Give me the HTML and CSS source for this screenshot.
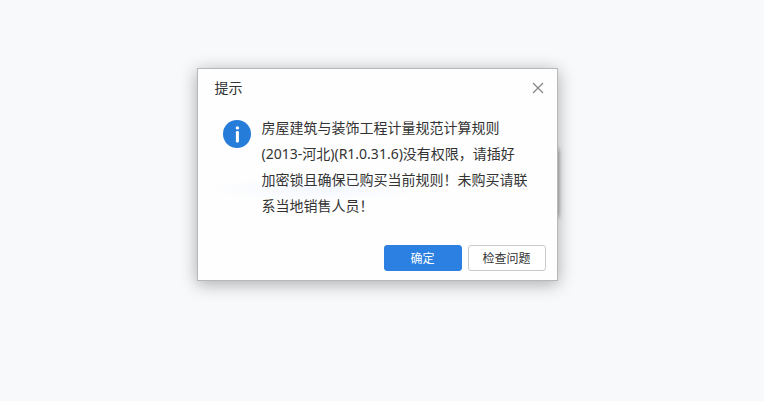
FILE: index.html
```html
<!DOCTYPE html>
<html lang="zh-CN">

<head>
    <meta charset="UTF-8">
    <meta name="viewport" content="width=device-width, initial-scale=1.0">
    <title>提示</title>
    <link rel="stylesheet" href="styles.css">
</head>

<body>
    <main>
        <section class="dialog" role="alertdialog" aria-labelledby="dialog-title" aria-describedby="dialog-message">
            <header class="dialog-header">
                <h1 class="dialog-title" id="dialog-title">提示</h1>
                <button class="close-button" type="button" aria-label="关闭">
                    <svg width="12" height="12" viewBox="0 0 12 12" aria-hidden="true">
                        <path d="M1 1 L11 11 M11 1 L1 11" fill="none" stroke="#858585" stroke-width="1.2" />
                    </svg>
                </button>
            </header>
            <div class="dialog-body">
                <svg class="info-icon" width="28" height="28" viewBox="0 0 28 28" aria-hidden="true">
                    <circle cx="14" cy="14" r="14" fill="#267cd9" />
                    <circle cx="14.4" cy="7.9" r="1.7" fill="#fff" />
                    <rect x="12.9" y="11" width="3" height="11.6" rx="1.3" fill="#fff" />
                </svg>
                <p class="dialog-message" id="dialog-message">房屋建筑与装饰工程计量规范计算规则(2013-河北)(R1.0.31.6)没有权限，请插好加密锁且确保已购买当前规则！未购买请联系当地销售人员！</p>
            </div>
            <footer class="dialog-footer">
                <button class="button button-primary" type="button">确定</button>
                <button class="button" type="button">检查问题</button>
            </footer>
        </section>
    </main>
</body>

</html>
```

FILE: styles.css
```css
* {
    box-sizing: border-box;
}

body {
    margin: 0;
    min-height: 100vh;
    background-color: #f8f9fb;
    color: #333;
    font-family: "Noto Sans", "Noto Sans CJK SC", sans-serif;
    font-size: 14px;
}

main {
    display: flex;
    align-items: flex-start;
    justify-content: center;
    min-height: 100vh;
    padding: 68px 10px 0 0;
}

.dialog {
    position: relative;
    width: 100%;
    max-width: 361px;
    border: 1px solid #b8b8b8;
    background-color: #fefefe;
    box-shadow: 0 3px 16px rgba(0, 0, 0, 0.32);
}

/* shadow of the window that lies behind the dialog */
.dialog::before {
    content: "";
    position: absolute;
    z-index: -1;
    top: 80px;
    right: -1px;
    width: 40px;
    height: 68px;
    box-shadow: 0 0 5px rgba(0, 0, 0, 0.5);
}

.dialog-header {
    display: flex;
    align-items: center;
    justify-content: space-between;
    height: 38px;
    padding: 0 9px 0 17px;
}

.dialog-title {
    margin: 0;
    font-size: 14px;
    font-weight: normal;
    line-height: 20px;
}

.close-button {
    display: flex;
    align-items: center;
    justify-content: center;
    width: 20px;
    height: 20px;
    padding: 0;
    border: none;
    background: none;
    cursor: pointer;
}

.dialog-body {
    display: flex;
    align-items: flex-start;
    gap: 11px;
    padding: 8px 28px 0 25px;
    background: radial-gradient(ellipse 110px 12px at 120px 82px, #f3f7fe, #fefefe);
}

.info-icon {
    flex: none;
    margin-top: 5px;
}

.dialog-message {
    flex: 1;
    margin: 0;
    line-height: 26px;
}

.dialog-footer {
    display: flex;
    justify-content: flex-end;
    gap: 6px;
    padding: 26px 11px 9px;
}

.button {
    width: 78px;
    height: 26px;
    padding: 0;
    border: 1px solid #c9c9c9;
    border-radius: 3px;
    background-color: #fff;
    color: #333;
    font-family: inherit;
    font-size: 12px;
    cursor: pointer;
}

.button-primary {
    border-color: #2b80e2;
    background-color: #2b80e2;
    color: #fff;
}
```
